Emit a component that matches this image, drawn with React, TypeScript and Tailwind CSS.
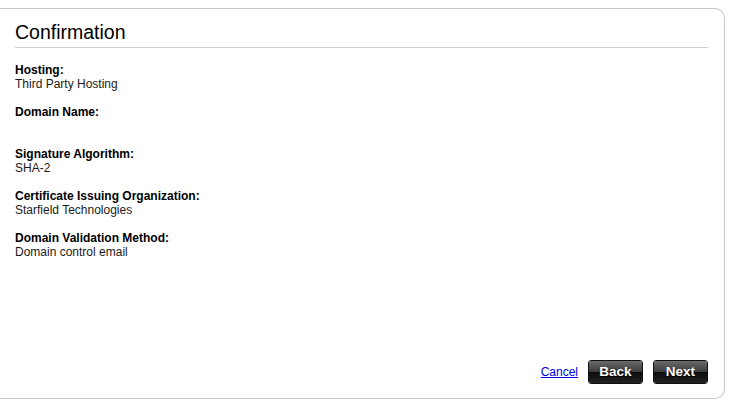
import React from "react";

const fields: { label: string; value: string }[] = [
  { label: "Hosting:", value: "Third Party Hosting" },
  { label: "Domain Name:", value: "" },
  { label: "Signature Algorithm:", value: "SHA-2" },
  { label: "Certificate Issuing Organization:", value: "Starfield Technologies" },
  { label: "Domain Validation Method:", value: "Domain control email" },
];

const DarkButton = ({ children }: { children: React.ReactNode }) => (
  <button
    type="button"
    className="relative h-[24px] w-[55px] overflow-hidden rounded-[3px] border border-[#111] text-[13.5px] font-bold text-white [text-shadow:0_1px_1px_#000]"
  >
    <span className="absolute inset-x-0 top-0 h-1/2 bg-gradient-to-b from-[#6a6a6a] to-[#3c3c3c]" />
    <span className="absolute inset-x-0 bottom-0 h-1/2 bg-gradient-to-b from-[#0c0c0c] to-[#222]" />
    <span className="relative">{children}</span>
  </button>
);

export default function App() {
  return (
    <div className="h-[407px] w-[731px] bg-white pt-[8px] font-['Liberation_Sans',Arial,sans-serif] text-black">
      <div className="flex h-[391px] w-[725px] flex-col rounded-r-[10px] border border-l-0 border-[#c8c8c8] pl-[15px] pr-[16px] pt-[12px] pb-[14px]">
        <h1 className="border-b border-[#cfcfcf] pb-[3px] text-[19.5px] leading-[23px] font-normal">
          Confirmation
        </h1>

        <div className="mt-[15px] flex flex-col gap-[14px] text-[12px] leading-[14px]">
          {fields.map((f) => (
            <div key={f.label}>
              <div className="font-bold">{f.label}</div>
              <div className="h-[14px] text-[#1a1a1a]">{f.value}</div>
            </div>
          ))}
        </div>

        <div className="flex-1" />

        <div className="flex items-center justify-end">
          <a href="#" className="mr-[10px] text-[12px] text-[#0000ee] underline">
            Cancel
          </a>
          <DarkButton>Back</DarkButton>
          <div className="ml-[10px] flex">
            <DarkButton>Next</DarkButton>
          </div>
        </div>
      </div>
    </div>
  );
}
